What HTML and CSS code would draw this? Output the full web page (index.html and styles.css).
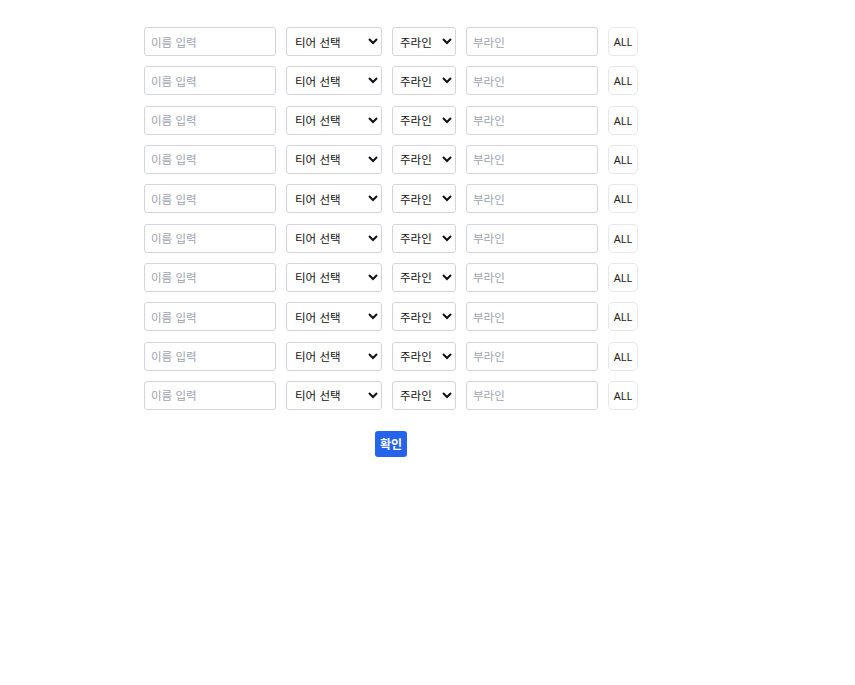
FILE: index.html
```html
<!DOCTYPE html>
<html lang="ko">
<head>
<meta charset="utf-8">
<link rel="stylesheet" href="styles.css">
</head>
<body>
<div class="wrap">
  <div class="rows">
    <div class="row"><input class="name" placeholder="이름 입력"><select class="tier"><option>티어 선택</option></select><select class="main"><option>주라인</option></select><input class="sub" placeholder="부라인"><button class="all">ALL</button></div>
    <div class="row"><input class="name" placeholder="이름 입력"><select class="tier"><option>티어 선택</option></select><select class="main"><option>주라인</option></select><input class="sub" placeholder="부라인"><button class="all">ALL</button></div>
    <div class="row"><input class="name" placeholder="이름 입력"><select class="tier"><option>티어 선택</option></select><select class="main"><option>주라인</option></select><input class="sub" placeholder="부라인"><button class="all">ALL</button></div>
    <div class="row"><input class="name" placeholder="이름 입력"><select class="tier"><option>티어 선택</option></select><select class="main"><option>주라인</option></select><input class="sub" placeholder="부라인"><button class="all">ALL</button></div>
    <div class="row"><input class="name" placeholder="이름 입력"><select class="tier"><option>티어 선택</option></select><select class="main"><option>주라인</option></select><input class="sub" placeholder="부라인"><button class="all">ALL</button></div>
    <div class="row"><input class="name" placeholder="이름 입력"><select class="tier"><option>티어 선택</option></select><select class="main"><option>주라인</option></select><input class="sub" placeholder="부라인"><button class="all">ALL</button></div>
    <div class="row"><input class="name" placeholder="이름 입력"><select class="tier"><option>티어 선택</option></select><select class="main"><option>주라인</option></select><input class="sub" placeholder="부라인"><button class="all">ALL</button></div>
    <div class="row"><input class="name" placeholder="이름 입력"><select class="tier"><option>티어 선택</option></select><select class="main"><option>주라인</option></select><input class="sub" placeholder="부라인"><button class="all">ALL</button></div>
    <div class="row"><input class="name" placeholder="이름 입력"><select class="tier"><option>티어 선택</option></select><select class="main"><option>주라인</option></select><input class="sub" placeholder="부라인"><button class="all">ALL</button></div>
    <div class="row"><input class="name" placeholder="이름 입력"><select class="tier"><option>티어 선택</option></select><select class="main"><option>주라인</option></select><input class="sub" placeholder="부라인"><button class="all">ALL</button></div>
  </div>
  <div class="actions"><button class="confirm">확인</button></div>
</div>
</body>
</html>
```
FILE: styles.css
```css
html, body {
  margin: 0;
  padding: 0;
  background: #ffffff;
  font-family: "Noto Sans", "Noto Sans CJK KR", sans-serif;
}
.wrap {
  width: 494px;
  margin-left: 144px;
  padding-top: 27px;
}
.rows {
  display: flex;
  flex-direction: column;
  gap: 10.33px;
}
.row {
  display: flex;
  gap: 10px;
  height: 29px;
}
input, select, button {
  box-sizing: border-box;
  height: 29px;
  margin: 0;
  font-family: "Noto Sans CJK KR", "Noto Sans", sans-serif;
  font-size: 11.5px;
  color: #111111;
  background: #ffffff;
}
input {
  border: 1px solid #d1d5db;
  border-radius: 3px;
  padding: 0 6px;
  outline: none;
}
input::placeholder {
  color: #9ca3af;
}
.name, .sub {
  width: 132px;
}
select {
  border: 1px solid #d1d5db;
  border-radius: 3px;
  padding: 0 2px 0 4px;
}
.tier {
  width: 96px;
}
.main {
  width: 64px;
  padding-left: 3px;
}
.all {
  width: 30px;
  padding: 0;
  border: 1px solid #e5e7eb;
  border-radius: 5px;
  font-family: "Noto Sans", "Liberation Sans", sans-serif;
  font-size: 11px;
  color: #222222;
}
.actions {
  display: flex;
  justify-content: center;
  margin-top: 21px;
}
.confirm {
  width: 32px;
  height: 26px;
  padding: 0;
  border: none;
  border-radius: 3px;
  background: #2563eb;
  color: #ffffff;
  font-weight: 700;
  font-size: 12px;
}
```
